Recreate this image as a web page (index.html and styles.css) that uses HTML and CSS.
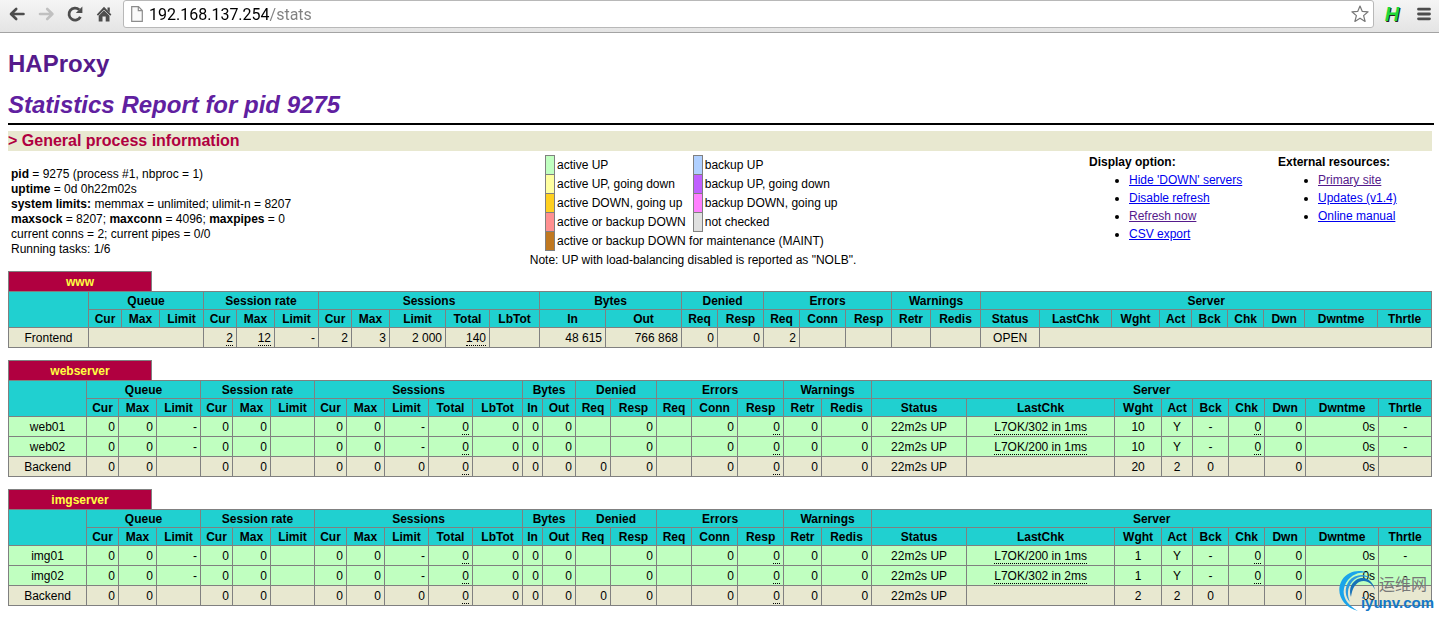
FILE: index.html
```
<!DOCTYPE html>
<html lang="en">
<head>
    <meta charset="utf-8">
    <title>Statistics Report for HAProxy</title>
    <link rel="stylesheet" href="styles.css">
</head>
<body>

    <div class="toolbar">
        <button type="button" class="tool" aria-label="Back">
            <svg width="18" height="18" viewBox="0 0 18 18"><path d="M8.2 4L3 9L8.2 14M3.5 9H15.5" fill="none" stroke="#4d4d4d" stroke-width="2.6" stroke-linecap="round" stroke-linejoin="round"/></svg>
        </button>
        <button type="button" class="tool" aria-label="Forward">
            <svg width="18" height="18" viewBox="0 0 18 18"><path d="M10.2 4L15.4 9L10.2 14M15 9H3" fill="none" stroke="#c0c0c0" stroke-width="2.6" stroke-linecap="round" stroke-linejoin="round"/></svg>
        </button>
        <button type="button" class="tool" aria-label="Reload">
            <svg width="18" height="18" viewBox="0 0 18 18"><path d="M14.4 11.8A6 6 0 1 1 13.2 4.8" fill="none" stroke="#4d4d4d" stroke-width="2.8"/><path d="M16.4 1.5V8H9.8Z" fill="#4d4d4d"/></svg>
        </button>
        <button type="button" class="tool" aria-label="Home">
            <svg width="18" height="18" viewBox="0 0 18 18"><path d="M9 1.8L16.4 9.4L15.2 10.8H14.5V16.5H10.7V11.5H7.5V16.5H3.7V10.8H3L1.8 9.4Z M12.5 2.5H14.8V7.5L12.5 5.2Z" fill="#4d4d4d"/><path d="M3.2 11L9 5.1L15 11" fill="none" stroke="#ececec" stroke-width=".7"/></svg>
        </button>
        <div class="omnibox">
            <svg width="12" height="16" viewBox="0 0 12 16"><path d="M.7 .7H7.5L11.3 4.5V15.3H.7ZM7.3 .7V4.7H11.3" fill="#fafafa" stroke="#8c8c8c" stroke-width="1.2"/></svg>
            <input type="text" class="url" aria-label="Address" value="192.168.137.254/stats">
            <button type="button" class="star" aria-label="Bookmark">
                <svg width="20" height="20" viewBox="0 0 20 20"><path d="M10 2L12.3 7.4L18.1 7.8L13.6 11.6L15.1 17.4L10 14.2L4.9 17.4L6.4 11.6L1.9 7.8L7.7 7.4Z" fill="#fff" stroke="#777" stroke-width="1.2" stroke-linejoin="round"/></svg>
            </button>
        </div>
        <button type="button" class="ext" aria-label="Extension">H</button>
        <button type="button" class="menu" aria-label="Menu">
            <svg width="14" height="14" viewBox="0 0 14 14"><path d="M1.5 2.2H12.5M1.5 7H12.5M1.5 11.8H12.5" stroke="#4d4d4d" stroke-width="2.8" stroke-linecap="round"/></svg>
        </button>
    </div>

    <div class="page">
        <h1><a href="#">HAProxy</a></h1>
        <h2>Statistics Report for pid 9275</h2>
        <hr>
        <h3>&gt; General process information</h3>

        <div class="info">
            <p class="process">
                <b>pid</b> = 9275 (process #1, nbproc = 1)<br>
                <b>uptime</b> = 0d 0h22m02s<br>
                <b>system limits:</b> memmax = unlimited; ulimit-n = 8207<br>
                <b>maxsock</b> = 8207; <b>maxconn</b> = 4096; <b>maxpipes</b> = 0<br>
                current conns = 2; current pipes = 0/0<br>
                Running tasks: 1/6
            </p>

            <div class="legend">
                <table>
                    <tr><td class="key active3"></td><td>active UP</td><td class="key backup3"></td><td>backup UP</td></tr>
                    <tr><td class="key active2"></td><td>active UP, going down</td><td class="key backup2"></td><td>backup UP, going down</td></tr>
                    <tr><td class="key active1"></td><td>active DOWN, going up</td><td class="key backup1"></td><td>backup DOWN, going up</td></tr>
                    <tr><td class="key active0"></td><td>active or backup DOWN</td><td class="key nocheck"></td><td>not checked</td></tr>
                    <tr><td class="key maintain"></td><td colspan="3">active or backup DOWN for maintenance (MAINT)</td></tr>
                </table>
                <p>Note: UP with load-balancing disabled is reported as "NOLB".</p>
            </div>

            <div class="links">
                <b>Display option:</b>
                <ul>
                    <li><a href="#hide">Hide 'DOWN' servers</a></li>
                    <li><a href="#norefresh">Disable refresh</a></li>
                    <li><a href="#refresh" class="seen">Refresh now</a></li>
                    <li><a href="#csv">CSV export</a></li>
                </ul>
            </div>

            <div class="links">
                <b>External resources:</b>
                <ul>
                    <li><a href="#site" class="seen">Primary site</a></li>
                    <li><a href="#updates">Updates (v1.4)</a></li>
                    <li><a href="#manual">Online manual</a></li>
                </ul>
            </div>
        </div>

        <h4 class="pxname">www</h4>
        <table class="tbl www">
            <colgroup>
                <col class="name"><col class="cur"><col class="max"><col class="lim">
                <col class="cur"><col class="max"><col class="lim">
                <col class="cur"><col class="max"><col class="slim"><col class="total"><col class="lbtot">
                <col class="in"><col class="out"><col class="req"><col class="resp">
                <col class="req"><col class="conn"><col class="resp"><col class="retr"><col class="redis">
                <col class="status"><col class="lastchk"><col class="wght"><col class="act"><col class="bck">
                <col class="chk"><col class="dwn"><col class="dwntme"><col class="thrtle">
            </colgroup>
            <thead>
                <tr><th rowspan="2"></th><th colspan="3">Queue</th><th colspan="3">Session rate</th><th colspan="5">Sessions</th><th colspan="2">Bytes</th><th colspan="2">Denied</th><th colspan="3">Errors</th><th colspan="2">Warnings</th><th colspan="9">Server</th></tr>
                <tr><th>Cur</th><th>Max</th><th>Limit</th><th>Cur</th><th>Max</th><th>Limit</th><th>Cur</th><th>Max</th><th>Limit</th><th>Total</th><th>LbTot</th><th>In</th><th>Out</th><th>Req</th><th>Resp</th><th>Req</th><th>Conn</th><th>Resp</th><th>Retr</th><th>Redis</th><th>Status</th><th>LastChk</th><th>Wght</th><th>Act</th><th>Bck</th><th>Chk</th><th>Dwn</th><th>Dwntme</th><th>Thrtle</th></tr>
            </thead>
            <tbody>
                <tr class="total-row"><td class="ac">Frontend</td><td colspan="3"></td><td><u>2</u></td><td><u>12</u></td><td>-</td><td>2</td><td>3</td><td>2 000</td><td><u>140</u></td><td></td><td>48 615</td><td>766 868</td><td>0</td><td>0</td><td>2</td><td></td><td></td><td></td><td></td><td class="ac">OPEN</td><td colspan="8"></td></tr>
            </tbody>
        </table>

        <h4 class="pxname">webserver</h4>
        <table class="tbl">
            <colgroup>
                <col class="name"><col class="cur"><col class="max"><col class="lim">
                <col class="cur"><col class="max"><col class="lim">
                <col class="cur"><col class="max"><col class="slim"><col class="total"><col class="lbtot">
                <col class="in"><col class="out"><col class="req"><col class="resp">
                <col class="req"><col class="conn"><col class="resp"><col class="retr"><col class="redis">
                <col class="status"><col class="lastchk"><col class="wght"><col class="act"><col class="bck">
                <col class="chk"><col class="dwn"><col class="dwntme"><col class="thrtle">
            </colgroup>
            <thead>
                <tr><th rowspan="2"></th><th colspan="3">Queue</th><th colspan="3">Session rate</th><th colspan="5">Sessions</th><th colspan="2">Bytes</th><th colspan="2">Denied</th><th colspan="3">Errors</th><th colspan="2">Warnings</th><th colspan="9">Server</th></tr>
                <tr><th>Cur</th><th>Max</th><th>Limit</th><th>Cur</th><th>Max</th><th>Limit</th><th>Cur</th><th>Max</th><th>Limit</th><th>Total</th><th>LbTot</th><th>In</th><th>Out</th><th>Req</th><th>Resp</th><th>Req</th><th>Conn</th><th>Resp</th><th>Retr</th><th>Redis</th><th>Status</th><th>LastChk</th><th>Wght</th><th>Act</th><th>Bck</th><th>Chk</th><th>Dwn</th><th>Dwntme</th><th>Thrtle</th></tr>
            </thead>
            <tbody>
                <tr class="active3"><td class="ac">web01</td><td>0</td><td>0</td><td>-</td><td>0</td><td>0</td><td></td><td>0</td><td>0</td><td>-</td><td><u>0</u></td><td>0</td><td>0</td><td>0</td><td></td><td>0</td><td></td><td>0</td><td><u>0</u></td><td>0</td><td>0</td><td class="ac">22m2s UP</td><td class="ac"><u>L7OK/302 in 1ms</u></td><td class="ac">10</td><td class="ac">Y</td><td class="ac">-</td><td><u>0</u></td><td>0</td><td>0s</td><td class="ac">-</td></tr>
                <tr class="active3"><td class="ac">web02</td><td>0</td><td>0</td><td>-</td><td>0</td><td>0</td><td></td><td>0</td><td>0</td><td>-</td><td><u>0</u></td><td>0</td><td>0</td><td>0</td><td></td><td>0</td><td></td><td>0</td><td><u>0</u></td><td>0</td><td>0</td><td class="ac">22m2s UP</td><td class="ac"><u>L7OK/200 in 1ms</u></td><td class="ac">10</td><td class="ac">Y</td><td class="ac">-</td><td><u>0</u></td><td>0</td><td>0s</td><td class="ac">-</td></tr>
                <tr class="total-row"><td class="ac">Backend</td><td>0</td><td>0</td><td></td><td>0</td><td>0</td><td></td><td>0</td><td>0</td><td>0</td><td><u>0</u></td><td>0</td><td>0</td><td>0</td><td>0</td><td>0</td><td></td><td>0</td><td><u>0</u></td><td>0</td><td>0</td><td class="ac">22m2s UP</td><td></td><td class="ac">20</td><td class="ac">2</td><td class="ac">0</td><td></td><td>0</td><td>0s</td><td></td></tr>
            </tbody>
        </table>

        <div class="last">
            <h4 class="pxname">imgserver</h4>
            <table class="tbl">
                <colgroup>
                    <col class="name"><col class="cur"><col class="max"><col class="lim">
                    <col class="cur"><col class="max"><col class="lim">
                    <col class="cur"><col class="max"><col class="slim"><col class="total"><col class="lbtot">
                    <col class="in"><col class="out"><col class="req"><col class="resp">
                    <col class="req"><col class="conn"><col class="resp"><col class="retr"><col class="redis">
                    <col class="status"><col class="lastchk"><col class="wght"><col class="act"><col class="bck">
                    <col class="chk"><col class="dwn"><col class="dwntme"><col class="thrtle">
                </colgroup>
                <thead>
                    <tr><th rowspan="2"></th><th colspan="3">Queue</th><th colspan="3">Session rate</th><th colspan="5">Sessions</th><th colspan="2">Bytes</th><th colspan="2">Denied</th><th colspan="3">Errors</th><th colspan="2">Warnings</th><th colspan="9">Server</th></tr>
                    <tr><th>Cur</th><th>Max</th><th>Limit</th><th>Cur</th><th>Max</th><th>Limit</th><th>Cur</th><th>Max</th><th>Limit</th><th>Total</th><th>LbTot</th><th>In</th><th>Out</th><th>Req</th><th>Resp</th><th>Req</th><th>Conn</th><th>Resp</th><th>Retr</th><th>Redis</th><th>Status</th><th>LastChk</th><th>Wght</th><th>Act</th><th>Bck</th><th>Chk</th><th>Dwn</th><th>Dwntme</th><th>Thrtle</th></tr>
                </thead>
                <tbody>
                    <tr class="active3"><td class="ac">img01</td><td>0</td><td>0</td><td>-</td><td>0</td><td>0</td><td></td><td>0</td><td>0</td><td>-</td><td><u>0</u></td><td>0</td><td>0</td><td>0</td><td></td><td>0</td><td></td><td>0</td><td><u>0</u></td><td>0</td><td>0</td><td class="ac">22m2s UP</td><td class="ac"><u>L7OK/200 in 1ms</u></td><td class="ac">1</td><td class="ac">Y</td><td class="ac">-</td><td><u>0</u></td><td>0</td><td>0s</td><td class="ac">-</td></tr>
                    <tr class="active3"><td class="ac">img02</td><td>0</td><td>0</td><td>-</td><td>0</td><td>0</td><td></td><td>0</td><td>0</td><td>-</td><td><u>0</u></td><td>0</td><td>0</td><td>0</td><td></td><td>0</td><td></td><td>0</td><td><u>0</u></td><td>0</td><td>0</td><td class="ac">22m2s UP</td><td class="ac"><u>L7OK/302 in 2ms</u></td><td class="ac">1</td><td class="ac">Y</td><td class="ac">-</td><td><u>0</u></td><td>0</td><td>0s</td><td class="ac">-</td></tr>
                    <tr class="total-row"><td class="ac">Backend</td><td>0</td><td>0</td><td></td><td>0</td><td>0</td><td></td><td>0</td><td>0</td><td>0</td><td><u>0</u></td><td>0</td><td>0</td><td>0</td><td>0</td><td>0</td><td></td><td>0</td><td><u>0</u></td><td>0</td><td>0</td><td class="ac">22m2s UP</td><td></td><td class="ac">2</td><td class="ac">2</td><td class="ac">0</td><td></td><td>0</td><td>0s</td><td></td></tr>
                </tbody>
            </table>

            <div class="watermark">
                <svg width="40" height="42" viewBox="0 0 40 42">
                    <path d="M30 3C21 -1 10 1 4 10C-3 22 4 37 20 41C8 34 3 25 7 15C11 6 20 1 30 3Z" fill="#1ba4ea"/>
                    <path d="M34 9C27 3 17 4 11 11C6 18 7 27 12 32C9 25 9 18 14 12C19 6 27 5 34 9Z" fill="#2b9ade"/>
                    <path d="M37 20C35 10 26 5 18 10C12 14 11 21 13 27C14 20 16 15 21 12C28 9 34 13 37 20Z" fill="#1672b8"/>
                </svg>
                <div class="wm-text">
                    <span class="wm-cn">运维网</span>
                    <span class="wm-en">iyunv.com</span>
                </div>
            </div>
        </div>
    </div>

</body>
</html>
```
FILE: styles.css
```
body {
    margin: 0;
    background: #fff;
    color: #000;
    font-family: "Liberation Sans", Arial, Helvetica, sans-serif;
    font-size: 12px;
    line-height: 15px;
}

button {
    padding: 0;
    border: 0;
    background: none;
    cursor: pointer;
}

/* browser bar */
.toolbar {
    display: flex;
    align-items: center;
    box-sizing: border-box;
    height: 33px;
    padding: 0 8px 4px;
    border-bottom: 1px solid #a3a3a3;
    background: linear-gradient(#f5f5f5, #e4e4e4);
}

.toolbar svg {
    display: block;
}

.tool {
    width: 18px;
    margin-right: 11px;
}

.omnibox {
    display: flex;
    flex: 1;
    align-items: center;
    box-sizing: border-box;
    height: 28px;
    margin-left: -1px;
    padding: 0 3px 0 7px;
    border: 1px solid #b8b8b8;
    border-radius: 3px;
    background: #fff;
}

.url {
    flex: 1;
    height: 24px;
    margin-left: 6px;
    padding: 0;
    border: 0;
    outline: none;
    font-family: Roboto, "Open Sans", sans-serif;
    font-size: 16px;
    color: transparent;
    background: linear-gradient(to right, #000 120px, #808080 120px);
    -webkit-background-clip: text;
    background-clip: text;
}

.ext {
    width: 18px;
    margin: 0 16px 0 9px;
    color: #1fd83a;
    font: italic bold 20px "Liberation Sans", Arial, sans-serif;
    text-shadow: 1px 1px 0 #222;
}

.menu {
    width: 14px;
}

/* report header */
.page {
    padding: 17px 7px 12px 8px;
}

h1,
h2 {
    margin: 0;
    font-size: 24px;
    line-height: 27px;
}

h1 a {
    color: #551a8b;
    text-decoration: none;
}

h2 {
    margin-top: 14px;
    color: #6020a0;
    font-style: italic;
}

hr {
    height: 2px;
    margin: 5px -2px 6px 0;
    border: 0;
    background: #000;
}

h3 {
    margin: 0;
    background: #e8e8d0;
    color: #b00040;
    font-size: 16px;
    line-height: 20px;
}

/* process info, legend and links */
.info {
    display: grid;
    grid-template-columns: 517fr 564fr 189fr 154fr;
    padding-top: 2px;
}

.process {
    margin: 14px 0 0 3px;
}

.legend {
    width: 336px;
    padding-top: 2px;
    white-space: nowrap;
}

.legend table {
    width: 296px;
    margin: 0 auto;
    border-collapse: collapse;
    table-layout: fixed;
}

.legend td {
    height: 18px;
    padding: 0 0 0 2px;
}

.legend .key {
    width: 8px;
    padding: 0;
    border: 1px solid #808080;
}

.legend p {
    margin: 0;
    line-height: 18px;
    text-align: center;
}

.links {
    line-height: 18px;
}

.links ul {
    margin: 0;
    padding-left: 40px;
}

.links a {
    color: #0000ee;
}

.links .seen {
    color: #551a8b;
}

/* proxy tables */
.pxname {
    box-sizing: border-box;
    width: 144px;
    height: 20px;
    margin: 12px 0 0;
    border: 1px solid #808080;
    border-bottom: 0;
    background: #b00040;
    color: #ffff40;
    font-size: 12px;
    line-height: 20px;
    text-align: center;
}

.info + .pxname {
    margin-top: 2px;
}

.tbl {
    width: 100%;
    border-collapse: collapse;
    table-layout: fixed;
}

.tbl th,
.tbl td {
    height: 15px;
    padding: 2px 0 0;
    border: 1px solid #808080;
    white-space: nowrap;
}

.tbl th {
    background: #20d0d0;
}

.tbl td {
    height: 17px;
    padding-right: 3px;
    text-align: right;
}

.tbl .ac {
    padding-right: 0;
    text-align: center;
}

.tbl u {
    text-decoration: none;
    border-bottom: 1px dotted #000;
}

.name { width: 78px; }
.cur { width: 32px; }
.max { width: 38px; }
.lim, .slim, .total { width: 44px; }
.lbtot { width: 50px; }
.in { width: 20px; }
.out { width: 33px; }
.req { width: 35px; }
.resp, .conn { width: 46px; }
.retr { width: 38px; }
.redis { width: 50px; }
.status { width: 95px; }
.lastchk { width: 148px; }
.wght { width: 47px; }
.act { width: 31px; }
.bck, .chk { width: 36px; }
.dwn { width: 41px; }
.dwntme { width: 73px; }
.thrtle { width: 53px; }

.www .name { width: 80px; }
.www .cur { width: 33px; }
.www .slim { width: 56px; }
.www .in { width: 66px; }
.www .out { width: 76px; }
.www .req { width: 36px; }
.www .retr { width: 39px; }
.www .status { width: 59px; }
.www .lastchk { width: 72px; }
.www .wght { width: 48px; }
.www .act { width: 32px; }
.www .thrtle { width: 54px; }

.total-row { background: #e8e8d0; }
.active0 { background: #ff9090; }
.active1 { background: #ffd020; }
.active2 { background: #ffffa0; }
.active3 { background: #c0ffc0; }
.backup1 { background: #ff80ff; }
.backup2 { background: #c060ff; }
.backup3 { background: #b0d0ff; }
.nocheck { background: #e0e0e0; }
.maintain { background: #c07820; }

/* site mark over the last table */
.last {
    position: relative;
}

.watermark {
    display: flex;
    position: absolute;
    right: -2px;
    bottom: -6px;
}

.wm-text {
    display: flex;
    flex-direction: column;
    margin-left: -17px;
    padding-top: 4px;
    line-height: 19px;
}

.wm-cn {
    padding-left: 18px;
    color: #777;
    font-family: "Noto Sans CJK SC", sans-serif;
    font-size: 16px;
}

.wm-en {
    color: #1478c8;
    font-size: 15px;
    font-weight: bold;
}
```
